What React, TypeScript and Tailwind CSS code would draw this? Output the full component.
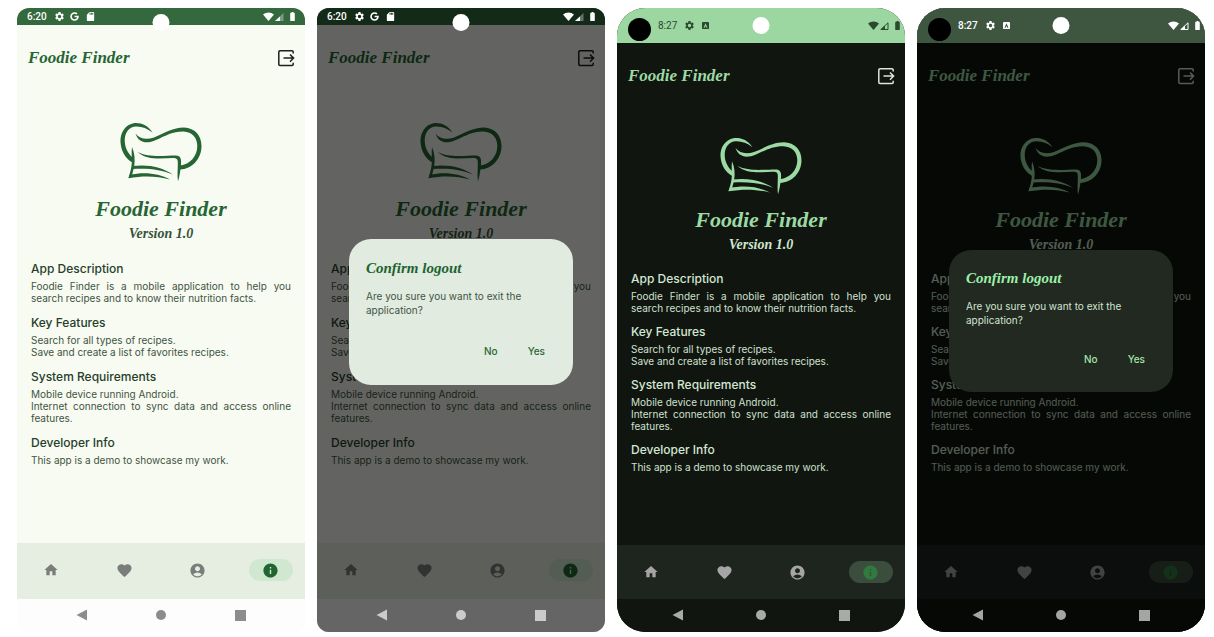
import React from "react";
import { MdHome, MdFavorite, MdAccountCircle, MdInfo, MdSettings, MdSdCard, MdBatteryFull } from "react-icons/md";
import { FaGoogle } from "react-icons/fa";

type Theme = {
  night: boolean;
  screen: string;
  statusBar: string;
  accent: string;
  version: string;
  heading: string;
  body: string;
  exit: string;
  nav: string;
  navIcon: string;
  pill: string;
  pillIcon: string;
  systemBar: string;
};

const light: Theme = {
  night: false,
  screen: "bg-[#f8fbf2] rounded-xl",
  statusBar: "bg-[#33693d] h-[17px] pl-[10px] pr-[9px]",
  accent: "text-[#266534]",
  version: "text-[#36513a]",
  heading: "text-[#263e2b]",
  body: "text-[#3f5543]",
  exit: "text-[#1c211c]",
  nav: "bg-[#e6eee2] h-[56px] pb-[2px]",
  navIcon: "text-[#7b7d7b]",
  pill: "bg-[#d0e8d0]",
  pillIcon: "text-[#216532]",
  systemBar: "bg-[#fdfdfd]",
};

const dark: Theme = {
  night: true,
  screen: "bg-[#101510] rounded-[28px]",
  statusBar: "bg-[#9cd6a1] h-[35px] pl-[11px] pr-[4px]",
  accent: "text-[#9cdaa3]",
  version: "text-[#cfe6cf]",
  heading: "text-[#d3e8d3]",
  body: "text-[#cfe0ce]",
  exit: "text-[#e0e4db]",
  nav: "bg-[#1d251e] h-[54px]",
  navIcon: "text-[#a5a5a5]",
  pill: "bg-[#3b4d3c]",
  pillIcon: "text-[#30793f]",
  systemBar: "bg-[#101510]",
};

const sections = [
  {
    title: "App Description",
    lines: ["Foodie Finder is a mobile application to help you search recipes and to know their nutrition facts."],
  },
  {
    title: "Key Features",
    lines: ["Search for all types of recipes.", "Save and create a list of favorites recipes."],
  },
  {
    title: "System Requirements",
    lines: ["Mobile device running Android.", "Internet connection to sync data and access online features."],
  },
  { title: "Developer Info", lines: ["This app is a demo to showcase my work."] },
];

const script = "font-['Liberation_Serif',serif] font-bold italic";

function ChefHat({ className }: { className: string }) {
  return (
    <svg viewBox="0 0 82 60" preserveAspectRatio="none" fill="currentColor" className={className} aria-hidden="true">
      <path d="M32.500 10.500C28 3 21 0.500 14.500 1C5 2.500 0 11 0.500 20C1 29 5.500 37 12.500 40.500L12.500 35.500C7.500 31 4.700 25 4.700 18C5 10 9.500 4.800 16 4.500C22 4.300 27 6.500 32.500 10.500Z" />
      <path d="M15.500 11.500C20 17.500 27 17.800 34 15.500C45 11 53 5.500 64 5.500C75 6 81.500 13.500 81.500 24C81.500 37 72 47 60 47.500L60 43.500C70 42.500 77.300 34 77.300 24C77.300 15.500 72 10 63.500 9.500C53 9.300 46 13.500 36 18C26 22.500 18.500 20.500 15.500 11.500Z" />
      <path d="M17.500 30C29 36 45 33.500 56 33.500C60.500 33.500 61.500 37 61 42C60.500 49 59.500 54 58 59.500C57 53 58 47 57.800 40C57.700 37 56.500 36 53 36C41 36.500 27 38.500 17.500 30Z" />
      <path d="M12 25C14.700 31 15.200 38 14.200 44C13.500 48 12.500 51 11.500 55L8.500 56C10 51 11.500 46 11.800 41C12.200 36 11.200 31 12 25Z" />
      <path d="M12.500 44C28 42 42 45 53 52.500C41 47.500 29 46 12.500 47Z" />
      <path d="M9.500 52.800C25 49.500 39 51.500 50 57.500C37 54 24 53.500 8.500 56.200Z" />
    </svg>
  );
}

function WifiSignal({ outline }: { outline: boolean }) {
  return (
    <svg viewBox="0 0 22 10" className="h-[10px] w-[22px]" fill="currentColor" aria-hidden="true">
      <path d="M0 2.500C3.300 -0.200 7.700 -0.200 11 2.500L5.500 9Z" />
      {outline ? (
        <>
          <path d="M13 8.500H20V1.800Z" fill="none" stroke="currentColor" />
          <path d="M12 9H17V4.500Z" />
        </>
      ) : (
        <>
          <path d="M12 9H20.500V1Z" opacity="0.35" />
          <path d="M12 9H17V4.500Z" />
        </>
      )}
    </svg>
  );
}

function StatusBar({ theme, dimmed }: { theme: Theme; dimmed: boolean }) {
  const ink = theme.night && !dimmed ? "text-[#2b4a2f]" : "text-white";
  return (
    <div className={`relative shrink-0 ${theme.statusBar}`}>
      {dimmed && <div className="absolute inset-0 bg-black/60" />}
      <div className={`relative flex h-full items-center font-['Roboto',sans-serif] text-[10px] leading-[12px] ${ink}`}>
        {theme.night ? <span className="mt-2 mr-[7px] size-[23px] rounded-full bg-black" /> : null}
        <span className={theme.night && !dimmed ? "" : "font-medium"}>{theme.night ? "8:27" : "6:20"}</span>
        <MdSettings className="ml-[7px] size-[11px]" />
        {theme.night ? (
          <svg viewBox="0 0 8 8" className="ml-[7px] size-[7px]" aria-hidden="true">
            <path fill="currentColor" fillRule="evenodd" d="M1 0H7Q8 0 8 1V7Q8 8 7 8H1Q0 8 0 7V1Q0 0 1 0ZM4 1.500L1.800 6.500H3L4 4.500L5 6.500H6.200Z" />
          </svg>
        ) : (
          <>
            <FaGoogle className="ml-[5px] size-[9px]" />
            <MdSdCard className="ml-[6px] size-[11px]" />
          </>
        )}
        <span className="ml-auto flex items-center gap-[2px]">
          <WifiSignal outline={theme.night} />
          <MdBatteryFull className="-mr-[2px] size-[11px]" />
        </span>
      </div>
      <span
        className={`absolute left-1/2 size-[17px] -translate-x-1/2 rounded-full bg-white ${theme.night ? "top-[9px]" : "top-[6px]"}`}
      />
    </div>
  );
}

function ConfirmDialog({ night }: { night: boolean }) {
  return (
    <div className={`absolute inset-0 flex items-center justify-center bg-black/60 ${night ? "pt-[2px]" : "pb-[17px]"}`}>
      <div
        role="dialog"
        aria-label="Confirm logout"
        className={`flex w-7/9 flex-col rounded-[22px] px-[17px] ${
          night ? "h-[142px] bg-[#212921] pt-[16px]" : "h-[146px] bg-[#e1ebdf] pt-[17px]"
        }`}
      >
        <h2 className={`${script} text-[15px] leading-6 ${night ? "text-[#9cf0a8]" : "text-[#1b6430]"}`}>Confirm logout</h2>
        <p className={`mt-[9px] text-[10px] leading-[14px] ${night ? "text-[#d2e4d2]" : "text-[#435546]"}`}>
          Are you sure you want to exit the application?
        </p>
        <div
          className={`flex justify-end gap-[30px] pr-[11px] text-[10px] leading-[14px] font-medium ${
            night ? "mt-[25px] text-[#a4e5aa]" : "mt-[27px] text-[#2a6638]"
          }`}
        >
          <button type="button">No</button>
          <button type="button">Yes</button>
        </div>
      </div>
    </div>
  );
}

function SystemBar({ theme, dimmed }: { theme: Theme; dimmed: boolean }) {
  const ink = theme.night ? "text-[#a9aba9]" : "text-[#8c8c8c]";
  const lit = theme.night ? "text-[#a4a5a4]" : "text-[#cbcbcb]";
  return (
    <div className={`relative shrink-0 ${theme.systemBar}`}>
      {dimmed && <div className="absolute inset-0 bg-black/60" />}
      <div className={`relative flex h-[33px] items-center justify-between pb-px ${theme.night ? "px-[55px]" : "px-[59px]"} ${dimmed ? lit : ink}`}>
        <button type="button" aria-label="Back">
          <svg viewBox="0 0 11 12" className="h-3 w-[11px]" fill="currentColor"><path d="M0.500 6L11 0.500V11.500Z" /></svg>
        </button>
        <button type="button" aria-label="Home screen" className="size-[10px] rounded-full bg-current" />
        <button type="button" aria-label="Recent apps" className="size-[11px] bg-current" />
      </div>
    </div>
  );
}

function Phone({ theme, dimmed = false }: { theme: Theme; dimmed?: boolean }) {
  const night = theme.night;
  return (
    <section className={`relative flex h-[624px] min-w-0 flex-1 flex-col overflow-hidden ${theme.screen}`}>
      <div className="relative z-10 shrink-0">
        <StatusBar theme={theme} dimmed={dimmed} />
      </div>
      <header className="flex h-[66px] shrink-0 items-center justify-between pr-[10px] pl-[11px]">
        <h1 className={`${script} text-[17px] leading-6 ${theme.accent}`}>Foodie Finder</h1>
        <button type="button" aria-label="Log out" className={theme.exit}>
          <svg viewBox="0 0 18 18" className="size-[18px]" fill="none" stroke="currentColor" strokeWidth="1.500">
            <path d="M16.200 4.500V3Q16.200 1.800 15 1.800H3Q1.800 1.800 1.800 3V15.200Q1.800 16.400 3 16.400H15Q16.200 16.400 16.200 15.200V13.700M6.500 9.100H16.500M13 5.500L16.600 9.100L13 12.700" />
          </svg>
        </button>
      </header>
      <main className="flex min-h-0 flex-1 flex-col">
        <div className={`flex flex-col items-center ${night ? "pt-[28px]" : "pt-[31px]"}`}>
          <ChefHat className={`w-[82px] ${theme.accent} ${night ? "h-[58px]" : "h-[60px]"}`} />
          <p className={`${script} text-[22px] leading-[32px] ${theme.accent} ${night ? "mt-[9px]" : "mt-[11px]"}`}>
            Foodie Finder
          </p>
          <p className={`${script} text-[14px] leading-[18px] ${theme.version}`}>Version 1.0</p>
        </div>
        <div className={`flex flex-col px-[14px] ${night ? "mt-[16px] gap-[9px]" : "mt-[17px] gap-[10px]"}`}>
          {sections.map((s) => (
            <section key={s.title} className="flex flex-col gap-[2px]">
              <h2 className={`text-[12px] leading-[18px] font-medium ${theme.heading}`}>{s.title}</h2>
              <div className={`text-justify text-[10px] leading-[12px] ${theme.body}`}>
                {s.lines.map((line) => (
                  <p key={line}>{line}</p>
                ))}
              </div>
            </section>
          ))}
        </div>
      </main>
      <nav aria-label="Main" className={`flex shrink-0 items-center justify-between px-3 ${theme.nav} ${theme.navIcon}`}>
        <a href="#home" aria-label="Home" className="flex w-11 justify-center"><MdHome className="size-4" /></a>
        <a href="#favorites" aria-label="Favorites" className="flex w-11 justify-center"><MdFavorite className="size-[17px]" /></a>
        <a href="#profile" aria-label="Profile" className="flex w-11 justify-center"><MdAccountCircle className="size-[17px]" /></a>
        <a href="#about" aria-label="About" className={`flex h-[22px] w-11 items-center justify-center rounded-full ${theme.pill} ${theme.pillIcon}`}>
          <MdInfo className="size-[17px]" />
        </a>
      </nav>
      {dimmed && <ConfirmDialog night={night} />}
      <div className="relative z-10 shrink-0">
        <SystemBar theme={theme} dimmed={dimmed} />
      </div>
    </section>
  );
}

export default function App() {
  return (
    <div className="flex min-h-screen items-start gap-3 bg-white pt-2 pr-[9px] pl-[17px] font-['Inter',sans-serif]">
      <Phone theme={light} />
      <Phone theme={light} dimmed />
      <Phone theme={dark} />
      <Phone theme={dark} dimmed />
    </div>
  );
}
